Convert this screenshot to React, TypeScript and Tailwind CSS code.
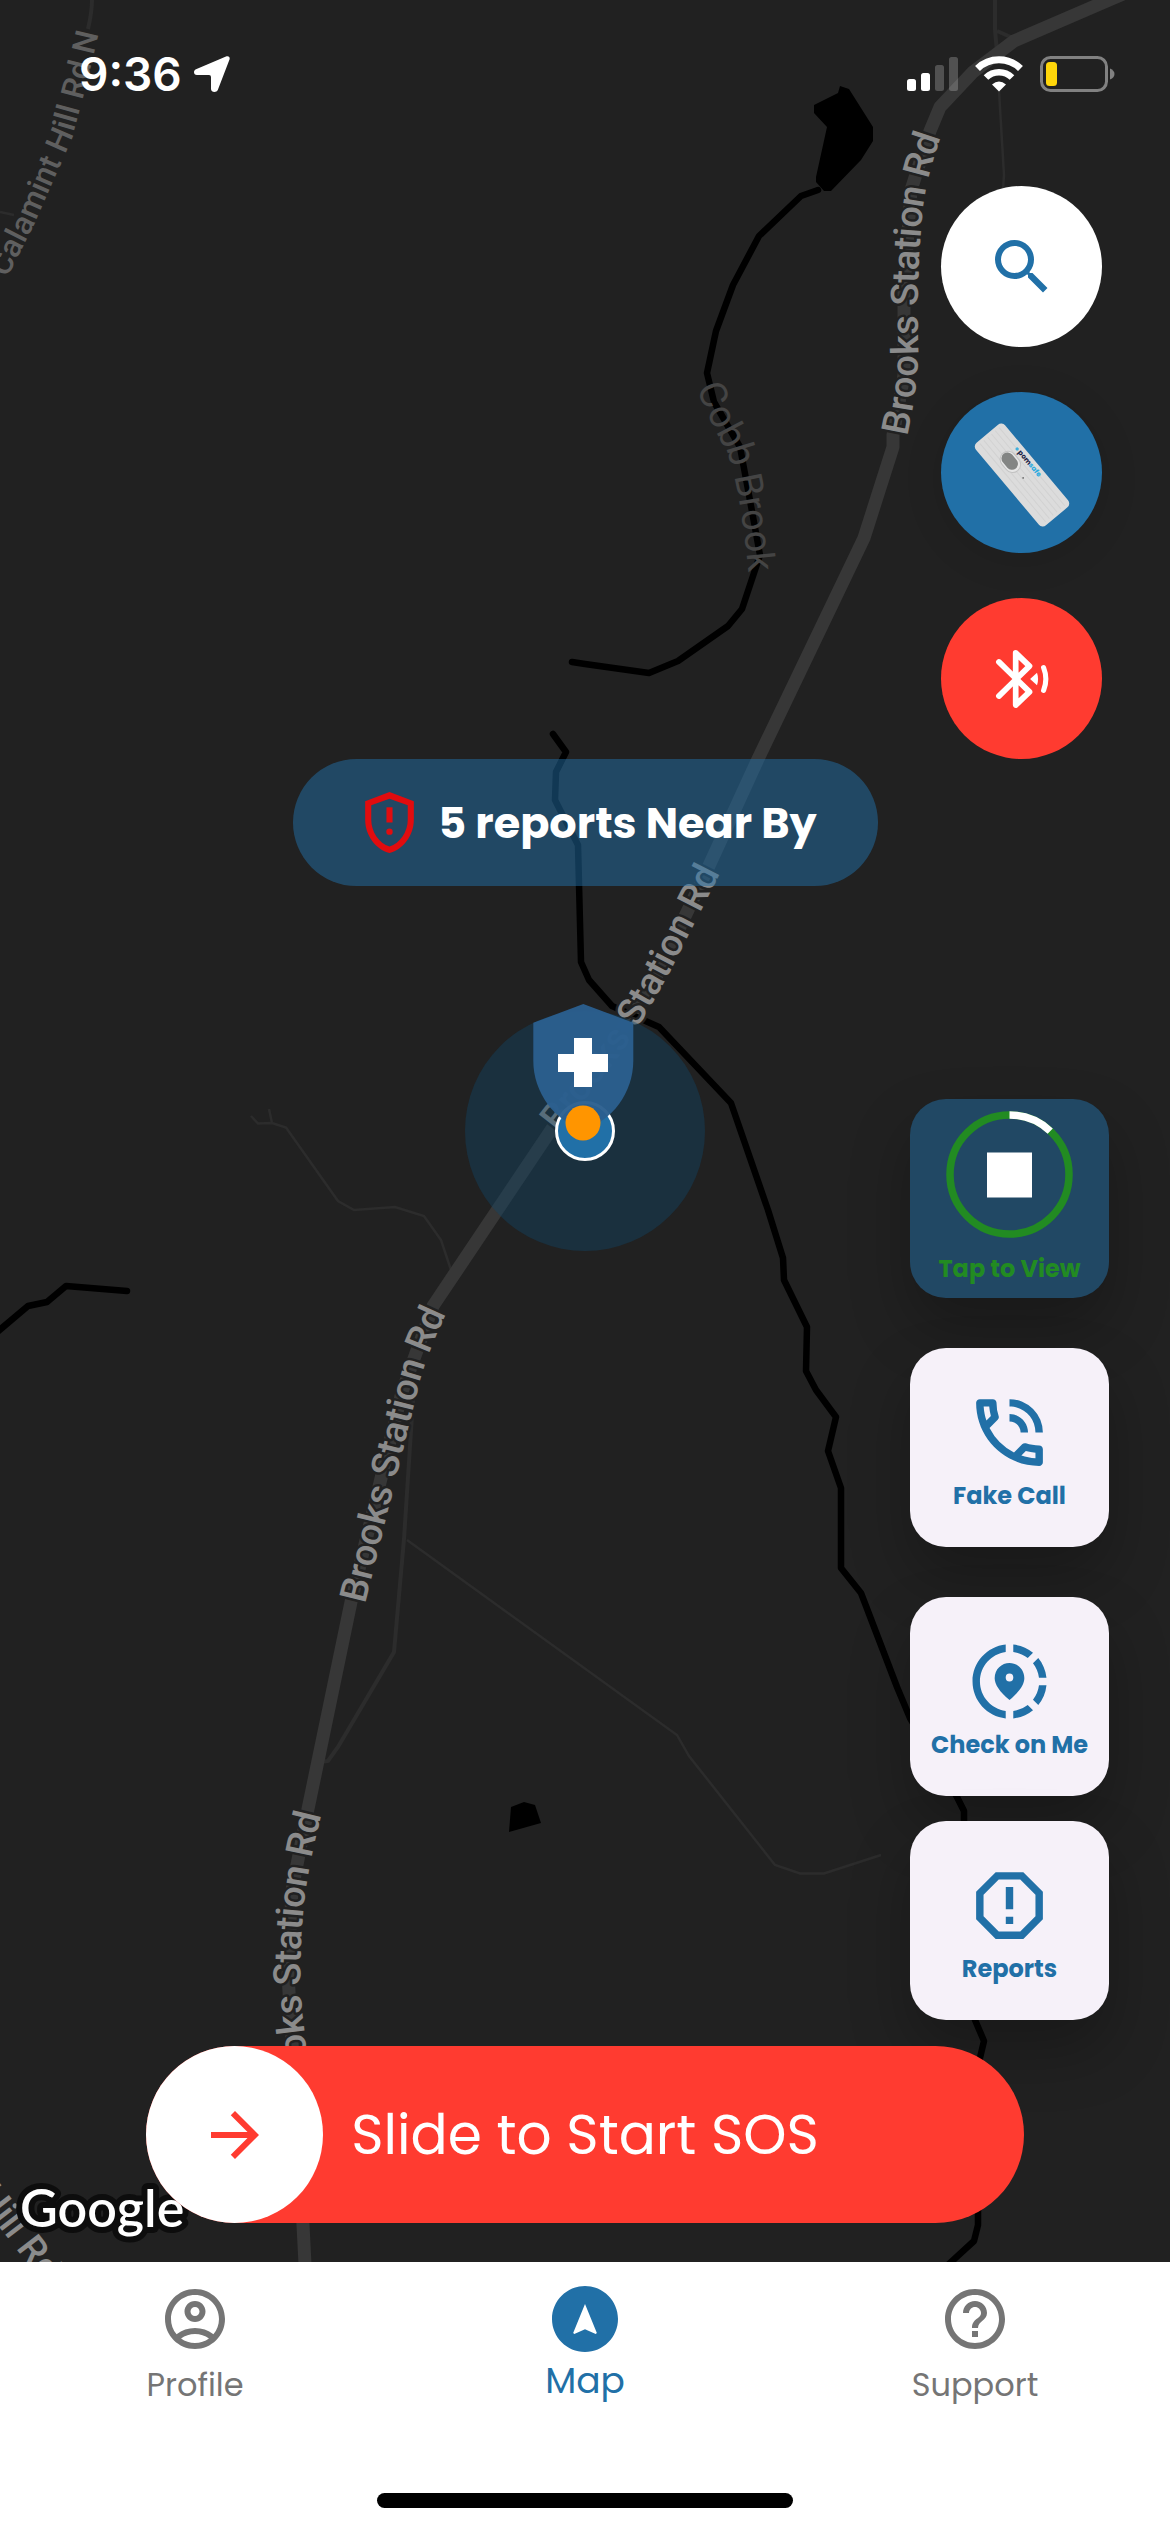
import { useState } from "react";
import type { ReactNode } from "react";
import {
  MdArrowForward,
  MdAssistantNavigation,
  MdHelpOutline,
  MdOutlineAccountCircle,
  MdOutlinePhoneInTalk,
  MdSearch,
  MdShareLocation,
} from "react-icons/md";

const LABEL = "Brooks Station Rd";

function StreetLabel({ id, d, text, size = 38, color = "#8b8b8b" }: { id: string; d: string; text: string; size?: number; color?: string }) {
  return (
    <>
      <path id={id} d={d} fill="none" />
      <text dy={size * 0.35} fontSize={size} fill={color} stroke="#212121" strokeWidth="5" strokeLinejoin="round" paintOrder="stroke" className="font-['Roboto',sans-serif] font-medium">
        <textPath href={`#${id}`}>{text}</textPath>
      </text>
    </>
  );
}

function MapCanvas() {
  return (
    <svg viewBox="0 0 1170 2262" preserveAspectRatio="xMidYMid slice" className="absolute inset-0 h-full w-full" aria-hidden="true">
      {/* minor roads */}
      <g fill="none" stroke="#2c2c2c" strokeWidth="2.500">
        <path d="M251 1116L258 1123.500L272 1123L286 1127.500L338 1201L354 1210L395 1207L424 1216L441 1240L451 1270" />
        <path d="M269 1109L272 1123" />
        <path d="M407 1540L490 1600L677 1735L689 1756L775 1865L800 1873.500H824L881 1855" />
        <path d="M0 212L14 215M999 91L1004 175L1003 190" />
        <g strokeWidth="4">
          <path d="M92 0Q92 12 88 29" />
          <path d="M413 1400L404 1539L394 1652L338 1747L328 1761L321 1762" />
          <path d="M995 0V30L997 52M997 31L1013 38" />
        </g>
      </g>

      {/* main road */}
      <path
        d="M1170 -26L1109 0L1014 41L973 72L940 107L930 131L911 190L904 290V375L893 435V447L864 538L758 759L708 868L650 990L551 1130L433 1306L402 1392L351 1602L308 1809L292 1890L288 1975L303 2225L305 2264"
        fill="none"
        stroke="#373737"
        strokeWidth="13"
        strokeLinejoin="round"
      />

      {/* water */}
      <g fill="none" stroke="#000" strokeWidth="6.500" strokeLinecap="round" strokeLinejoin="round">
        <path d="M818 190L801 196L759 236L733 285L716 331L707 373L714 402L740 447L749 495L760 555L755 570L742 609L728 626L678 661L649 673L585 664L572 662" />
        <path d="M553 734L566 752L556 772L555 800L578 845L581 962L589 980L612 1006L659 1027L731 1103L768 1210L783 1258L784 1280L807 1327L806 1371L816 1390L836 1417L828 1451L841 1488V1568L861 1593L897 1687L910 1718L957 1797L964 1811V1825L975 2020L984 2041L979 2062L978 2213V2225L974 2241L949 2264" />
        <path d="M-4 1333L28 1306L47 1302L66 1286L127 1291" />
      </g>
      <path d="M840 86L849 89L873 127V141L861 160L831 191H824L816 182V177L827 127L814 113V105L838 93Z" />
      <path d="M511 1807L524 1802L535 1805L541 1823L509 1832Z" />

      <StreetLabel id="brooks-1" d="M894 434Q905 385 905 345Q903 270 910 205Q915 165 936 112" text={LABEL} />
      <StreetLabel id="brooks-2" d="M548 1125L610 1046Q644 994 664 954L722 840" text={LABEL} />
      <StreetLabel id="brooks-3" d="M352 1601L375 1508L404 1390Q414 1346 444 1288" text={LABEL} />
      <StreetLabel id="brooks-4" d="M298 2114L291 2030Q284 1980 290 1910Q295 1860 313 1794" text={LABEL} />
      <StreetLabel id="calamint" d="M-3 273L24 220L60 138Q76 85 92 12" text="Calamint Hill Rd N" size={32} color="#5f5f5f" />
      <StreetLabel id="hill" d="M-14 2188L80 2310" text="Hill Rd N" />
      <path id="cobb" d="M709 383Q719 412 740 449Q755 494 763 590" fill="none" />
      <text dy="13" fontSize="38" fill="#444" className="font-['Roboto',sans-serif]">
        <textPath href="#cobb">Cobb Brook</textPath>
      </text>

      {/* current position and the report pin on it */}
      <circle cx="585" cy="1131" r="120" fill="#104467" fillOpacity="0.420" />
      <circle cx="585" cy="1131" r="28.500" fill="#2170a7" stroke="#fff" strokeWidth="3" />
      <path transform="translate(508.300 991.500) scale(6.250)" fill="#2b5f8f" fillOpacity="0.960" d="M12 2L4 5v6.090c0 5.050 3.410 9.760 8 10.910 4.590-1.150 8-5.860 8-10.910V5l-8-3z" />
      <path d="M574 1038h18v16h16v18h-16v15h-18v-15h-16v-18h16z" fill="#fff" />
      <circle cx="583" cy="1123" r="17.500" fill="#ff9500" />

      <text x="20" y="2227" fontSize="52" fill="#fff" stroke="#0d0d0d" strokeWidth="12" strokeLinejoin="round" paintOrder="stroke" className="font-['Lato',sans-serif] font-semibold">
        Google
      </text>
    </svg>
  );
}

function StatusBar() {
  return (
    <header className="flex h-[186px] items-start justify-between pt-[46px] pr-[55px] pl-[79px] text-white">
      <div className="flex h-14 items-center gap-3">
        <span className="font-['Inter',sans-serif] text-[46px] leading-[56px] font-semibold">9:36</span>
        <svg width="36" height="36" viewBox="0 0 36 36" fill="currentColor" aria-hidden="true">
          <path d="M32 .500C34.600-.500 36.400 1.200 35.400 3.800L23.800 34C22.700 36.900 17 36.700 17 33V21Q17 19 15 19H3C-.700 19-.900 14.500 2 13.300Z" />
        </svg>
      </div>
      <div className="flex h-14 items-center gap-[17px]">
        <svg width="51" height="36" viewBox="0 0 51 36" fill="currentColor" aria-hidden="true">
          <rect x="0" y="23" width="9" height="12" rx="2.500" />
          <rect x="14" y="17" width="9" height="18" rx="2.500" />
          <rect x="28" y="9" width="9" height="26" rx="2.500" fillOpacity="0.220" />
          <rect x="42" y="1" width="9" height="34" rx="2.500" fillOpacity="0.220" />
        </svg>
        <svg width="48" height="36" viewBox="0 0 48 36" fill="none" stroke="currentColor" aria-hidden="true">
          <path d="M2.500 12.500A31 31 0 0 1 45.500 12.500" strokeWidth="7" />
          <path d="M11 21.500A18.500 18.500 0 0 1 37 21.500" strokeWidth="6.500" />
          <path d="M24 35.500L17 28.500Q24 22.500 31 28.500Z" fill="currentColor" stroke="none" />
        </svg>
        <svg width="75" height="36" viewBox="0 0 75 36" aria-hidden="true">
          <rect x="1.500" y="1.500" width="65" height="33" rx="9" fill="none" stroke="#818181" strokeWidth="3" />
          <rect x="6" y="6" width="11" height="24" rx="3.500" fill="#ffd60a" />
          <path d="M70 12.500Q74.500 14.500 74.500 18T70 23.500Z" fill="#818181" />
        </svg>
      </div>
    </header>
  );
}

function RoundButton({ label, className, children }: { label: string; className: string; children: ReactNode }) {
  return (
    <button type="button" aria-label={label} className={`flex size-[161px] items-center justify-center rounded-full ${className}`}>
      {children}
    </button>
  );
}

function DeviceDrawing() {
  return (
    <svg width="120" height="120" viewBox="-60 -60 120 120" aria-hidden="true">
      <g transform="translate(0 2) rotate(50)">
        <rect x="-54" y="-19" width="108" height="38" rx="5" fill="#dcdcdc" />
        <g stroke="#d2d2d2" strokeWidth="1">
          <path d="M-51-13H51M-51-8H51M-51-3H51M-51 2H51M-51 7H51M-51 12H51" />
        </g>
        <rect x="-29" y="-7.500" width="23" height="16" rx="8" fill="#e6e6e6" stroke="#c2c2c2" strokeWidth="1" />
        <rect x="-28" y="-5.500" width="19" height="12" rx="6" fill="#838584" />
        <circle cx="3" cy="1" r="0.800" fill="#555" />
        <circle cx="-23" cy="-13" r="1.600" fill="#3fb0dd" />
        <text x="-20" y="-11" fontSize="7" fontWeight="700" fill="#1b1f45" className="font-['Poppins','Inter',sans-serif]">
          pom<tspan fill="#25a9e0">safe</tspan>
        </text>
      </g>
    </svg>
  );
}

function Tile({ label, children }: { label: string; children: ReactNode }) {
  return (
    <button type="button" className="flex size-[199px] flex-col items-center rounded-[36px] bg-[#f6f1f9] pt-10 text-[#2170a7] shadow-[0_30px_60px_rgba(0,0,0,0.25)]">
      {children}
      <span className="text-2xl leading-[38px] font-bold">{label}</span>
    </button>
  );
}

function SosSlider() {
  const [value, setValue] = useState(0);

  return (
    <div className="relative mx-auto mt-[26px] mb-[38px] flex h-[177px] w-3/4 items-center justify-center rounded-full bg-[#ff3b30]">
      <label htmlFor="sos" className="text-[55px] leading-[72px] text-white">Slide to Start SOS</label>
      <input
        id="sos"
        type="range"
        min={0}
        max={100}
        value={value}
        onChange={(e) => setValue(Number(e.target.value))}
        className="absolute inset-0 h-full w-full appearance-none rounded-full bg-transparent [&::-webkit-slider-thumb]:size-[177px] [&::-webkit-slider-thumb]:appearance-none [&::-webkit-slider-thumb]:rounded-full [&::-webkit-slider-thumb]:bg-white"
      />
      {value === 0 && (
        <div className="pointer-events-none absolute inset-y-0 left-0 flex w-[177px] items-center justify-center text-[#ff3b30]">
          <MdArrowForward size={72} />
        </div>
      )}
    </div>
  );
}

function NavItem({ label, icon, active = false }: { label: string; icon: ReactNode; active?: boolean }) {
  return (
    <a href="#" aria-current={active ? "page" : undefined} className={`flex flex-1 flex-col items-center pt-[21px] ${active ? "text-[#2170a7]" : "text-[#757575]"}`}>
      {icon}
      <span className={active ? "text-4xl leading-[52px]" : "mt-2 text-[32px] leading-[44px]"}>{label}</span>
    </a>
  );
}

export default function App() {
  return (
    <div className="flex min-h-screen flex-col bg-[#212121] font-['Poppins','Inter',sans-serif]">
      <main className="relative flex flex-1 flex-col overflow-hidden">
        <MapCanvas />
        <div className="relative flex flex-1 flex-col">
          <StatusBar />

          <div className="mr-[68px] flex flex-col gap-[45px] self-end">
            <RoundButton label="Search" className="bg-white text-[#2170a7]">
              <MdSearch size={72} />
            </RoundButton>
            <RoundButton label="Device" className="bg-[#2170a7] shadow-[0_6px_40px_rgba(0,0,0,0.1)]">
              <DeviceDrawing />
            </RoundButton>
            <RoundButton label="Bluetooth" className="bg-[#ff3b30] text-white">
              <svg width="72" height="72" viewBox="0 0 24 24" fill="none" stroke="currentColor" strokeWidth="1.900" strokeLinecap="round" strokeLinejoin="round" aria-hidden="true">
                <path d="M4.300 6.300L14.500 16.300L9.900 20.700V3.300L14.500 7.700L4.300 17.700" />
                <path d="M14.700 12L17 9.900Q17.700 12 17 14.100Z" fill="currentColor" stroke="none" />
                <path d="M19.200 8.200Q20.700 12 19.200 15.800" strokeWidth="1.700" />
              </svg>
            </RoundButton>
          </div>

          <button type="button" className="flex h-[127px] w-1/2 items-center justify-center gap-3 self-center rounded-full bg-[#2170a7]/50 text-white">
            <svg width="73" height="73" viewBox="0 0 24 24" fill="#e10c0f" aria-hidden="true">
              <path d="M12 2L4 5v6.090c0 5.050 3.410 9.760 8 10.910 4.590-1.150 8-5.860 8-10.910V5l-8-3zm6 9.090c0 4-2.550 7.700-6 8.830-3.450-1.130-6-4.820-6-8.830V6.310l6-2.120 6 2.120v4.780z" />
              <path d="M11 7h2v5h-2z" />
              <circle cx="12" cy="15" r="1.050" />
            </svg>
            <span className="text-[43px] leading-[60px] font-bold">5 reports Near By</span>
          </button>

          <div className="mt-[213px] mr-[61px] flex flex-col gap-[50px] self-end">
            <button type="button" className="flex size-[199px] flex-col items-center rounded-[36px] bg-[#2170a7]/50 pt-3 text-[#228b22] shadow-[0_30px_60px_rgba(0,0,0,0.25)]">
              <svg width="127" height="127" viewBox="0 0 127 127" fill="none" strokeWidth="7.500" aria-hidden="true">
                <circle cx="63.500" cy="63.500" r="59.500" stroke="#228b22" />
                <circle cx="63.500" cy="63.500" r="59.500" stroke="#fff" pathLength="100" strokeDasharray="12 88" transform="rotate(-90 63.500 63.500)" />
                <rect x="41" y="41.500" width="45" height="45" fill="#fff" />
              </svg>
              <span className="mt-3 text-2xl leading-[38px] font-bold">Tap to View</span>
            </button>
            <Tile label="Fake Call">
              <MdOutlinePhoneInTalk size={89} />
            </Tile>
            <div className="flex flex-col gap-[25px]">
              <Tile label="Check on Me">
                <MdShareLocation size={89} />
              </Tile>
              <Tile label="Reports">
                <svg width="89" height="89" viewBox="0 0 24 24" fill="currentColor" aria-hidden="true">
                  <path d="M15.730 3H8.270L3 8.270v7.460L8.270 21h7.460L21 15.730V8.270L15.730 3zM19 14.900L14.900 19H9.100L5 14.900V9.100L9.100 5h5.800L19 9.100v5.800z" />
                  <path d="M11 7h2v6h-2zM11 15h2v2h-2z" />
                </svg>
              </Tile>
            </div>
          </div>

          <SosSlider />
        </div>
      </main>

      <footer className="flex h-[270px] flex-col justify-between bg-white pb-6">
        <nav className="flex">
          <NavItem label="Profile" icon={<MdOutlineAccountCircle size={72} />} />
          <NavItem label="Map" icon={<MdAssistantNavigation size={72} />} active />
          <NavItem label="Support" icon={<MdHelpOutline size={72} />} />
        </nav>
        <div className="h-[15px] w-[416px] self-center rounded-full bg-black" />
      </footer>
    </div>
  );
}
